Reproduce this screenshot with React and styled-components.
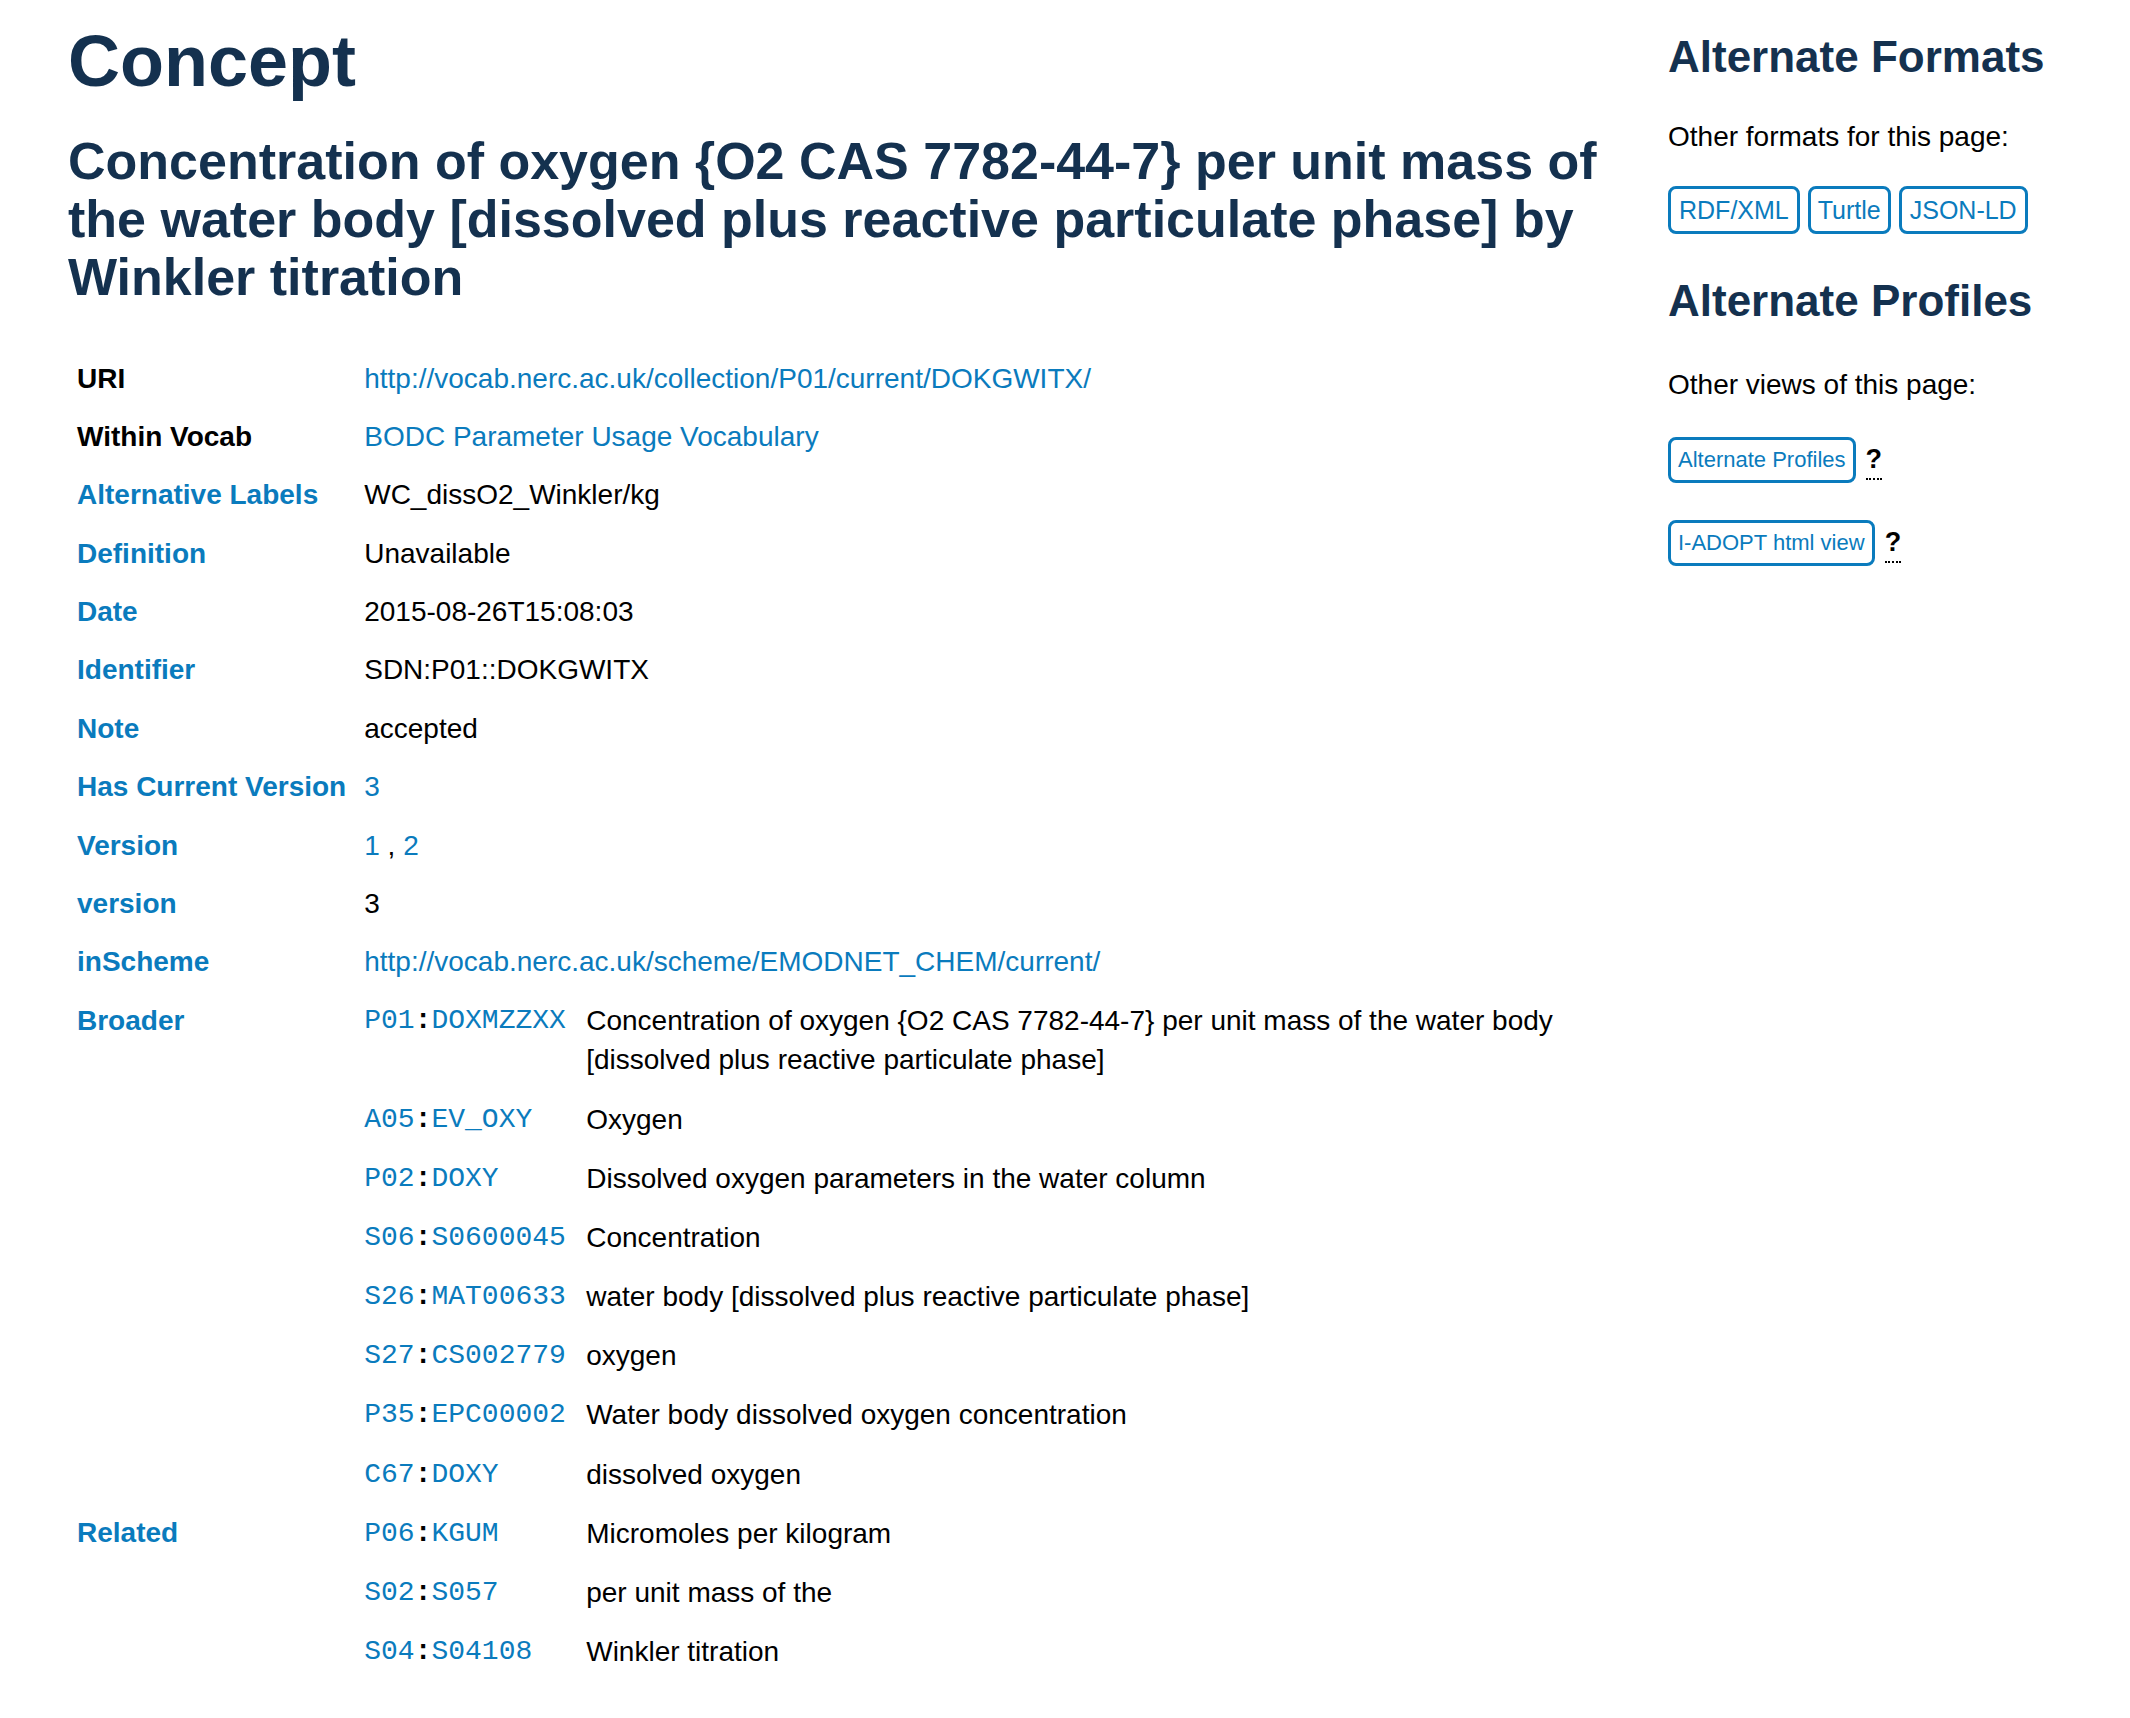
import React from "react";
import styled, { createGlobalStyle } from "styled-components";

const NAVY = "#14314f";
const BLUE = "#0a7bbd";

const Global = createGlobalStyle`
  html, body { margin: 0; padding: 0; background: #fff; }
  body {
    font-family: "Liberation Sans", Arial, Helvetica, sans-serif;
    font-size: 28px;
    line-height: 1.4;
    color: #000;
  }
  * { box-sizing: border-box; }
`;

const Page = styled.div`
  display: flex;
  align-items: flex-start;
  width: 2130px;
`;

const Main = styled.main`
  flex: 0 0 1630px;
  padding-left: 68px;
`;

const Aside = styled.aside`
  flex: 1;
  margin-left: 38px;
  padding-top: 31px;
`;

const Title = styled.h1`
  margin: 22px 0 0;
  font-size: 72px;
  line-height: 79px;
  font-weight: 700;
  color: ${NAVY};
`;

const Subtitle = styled.h2`
  margin: 31px 0 43px;
  font-size: 52px;
  line-height: 58px;
  font-weight: 700;
  color: ${NAVY};
`;

const PropTable = styled.div`
  display: grid;
  grid-template-columns: max-content minmax(0, 1fr);
`;

const Label = styled.div`
  padding: 9.6px 9px;
  font-weight: 700;
  white-space: nowrap;
  color: ${(p) => (p.$plain ? "#000" : BLUE)};
`;

const Value = styled.div`
  padding: ${(p) => (p.$nested ? "0 9px" : "9.6px 9px")};
  min-width: 0;
`;

const Link = styled.a`
  color: ${BLUE};
  text-decoration: none;
`;

const Nested = styled.div`
  display: grid;
  grid-template-columns: 222px minmax(0, 1fr);
`;

const Prefix = styled.div`
  padding: 10px 0;
  font-family: "Liberation Mono", "Courier New", monospace;
  font-size: 28px;
  white-space: nowrap;
`;

const PrefixPart = styled.span`
  color: ${BLUE};
`;

const Colon = styled.span`
  color: #000;
  font-weight: 700;
`;

const Desc = styled.div`
  padding: 10px 0;
`;

const SideTitle = styled.h3`
  margin: 0;
  font-size: 44px;
  line-height: 52px;
  font-weight: 700;
  color: ${NAVY};
  margin-top: ${(p) => p.$top || 0}px;
`;

const SideText = styled.p`
  margin: ${(p) => p.$top || 35}px 0 0;
  font-size: 28px;
  line-height: 39px;
`;

const ButtonRow = styled.div`
  display: flex;
  align-items: center;
  gap: ${(p) => p.$gap || 10}px;
  margin-top: ${(p) => p.$top}px;
`;

const FormatButton = styled.a`
  display: inline-block;
  border: 3px solid ${BLUE};
  border-radius: 8px;
  color: ${BLUE};
  text-decoration: none;
  font-size: ${(p) => p.$size}px;
  line-height: ${(p) => p.$lh}px;
  padding: 4px ${(p) => p.$px}px;
  white-space: nowrap;
`;

const Help = styled.abbr`
  font-weight: 700;
  font-size: 27px;
  line-height: 26px;
  color: #000;
  text-decoration: none;
  border-bottom: 2px dotted #000;
  padding-bottom: 6px;
  margin-top: 6px;
  cursor: help;
`;

const rows = [
  { label: "URI", plain: true, value: <Link href="#">http://vocab.nerc.ac.uk/collection/P01/current/DOKGWITX/</Link> },
  { label: "Within Vocab", plain: true, value: <Link href="#">BODC Parameter Usage Vocabulary</Link> },
  { label: "Alternative Labels", value: "WC_dissO2_Winkler/kg" },
  { label: "Definition", value: "Unavailable" },
  { label: "Date", value: "2015-08-26T15:08:03" },
  { label: "Identifier", value: "SDN:P01::DOKGWITX" },
  { label: "Note", value: "accepted" },
  { label: "Has Current Version", value: <Link href="#">3</Link> },
  {
    label: "Version",
    value: (
      <>
        <Link href="#">1</Link> , <Link href="#">2</Link>
      </>
    ),
  },
  { label: "version", value: "3" },
  { label: "inScheme", value: <Link href="#">http://vocab.nerc.ac.uk/scheme/EMODNET_CHEM/current/</Link> },
];

const broader = [
  ["P01", "DOXMZZXX", "Concentration of oxygen {O2 CAS 7782-44-7} per unit mass of the water body [dissolved plus reactive particulate phase]"],
  ["A05", "EV_OXY", "Oxygen"],
  ["P02", "DOXY", "Dissolved oxygen parameters in the water column"],
  ["S06", "S0600045", "Concentration"],
  ["S26", "MAT00633", "water body [dissolved plus reactive particulate phase]"],
  ["S27", "CS002779", "oxygen"],
  ["P35", "EPC00002", "Water body dissolved oxygen concentration"],
  ["C67", "DOXY", "dissolved oxygen"],
];

const related = [
  ["P06", "KGUM", "Micromoles per kilogram"],
  ["S02", "S057", "per unit mass of the"],
  ["S04", "S04108", "Winkler titration"],
];

const SUBTITLE =
  "Concentration of oxygen {O2 CAS 7782-44-7} per unit mass of the water body [dissolved plus reactive particulate phase] by Winkler titration";

function NestedList({ items }) {
  return (
    <Nested>
      {items.map(([a, b, d]) => (
        <React.Fragment key={a + b}>
          <Prefix>
            <PrefixPart>{a}</PrefixPart>
            <Colon>:</Colon>
            <PrefixPart>{b}</PrefixPart>
          </Prefix>
          <Desc>{d}</Desc>
        </React.Fragment>
      ))}
    </Nested>
  );
}

export default function App() {
  return (
    <>
      <Global />
      <Page>
        <Main>
          <Title>Concept</Title>
          <Subtitle>{SUBTITLE}</Subtitle>
          <PropTable>
            {rows.map((r) => (
              <React.Fragment key={r.label}>
                <Label $plain={r.plain}>{r.label}</Label>
                <Value>{r.value}</Value>
              </React.Fragment>
            ))}
            <Label>Broader</Label>
            <Value $nested>
              <NestedList items={broader} />
            </Value>
            <Label>Related</Label>
            <Value $nested>
              <NestedList items={related} />
            </Value>
          </PropTable>
        </Main>
        <Aside>
          <SideTitle>Alternate Formats</SideTitle>
          <SideText $top={34}>Other formats for this page:</SideText>
          <ButtonRow $top={30} $gap={8}>
            <FormatButton href="#" $size={25} $lh={34} $px={8}>RDF/XML</FormatButton>
            <FormatButton href="#" $size={25} $lh={34} $px={7}>Turtle</FormatButton>
            <FormatButton href="#" $size={25} $lh={34} $px={8}>JSON-LD</FormatButton>
          </ButtonRow>
          <SideTitle $top={41}>Alternate Profiles</SideTitle>
          <SideText $top={38}>Other views of this page:</SideText>
          <ButtonRow $top={33} $gap={10}>
            <FormatButton href="#" $size={22} $lh={32} $px={7}>Alternate Profiles</FormatButton>
            <Help title="Alternate Profiles">?</Help>
          </ButtonRow>
          <ButtonRow $top={37} $gap={10}>
            <FormatButton href="#" $size={22} $lh={32} $px={7}>I-ADOPT html view</FormatButton>
            <Help title="I-ADOPT html view">?</Help>
          </ButtonRow>
        </Aside>
      </Page>
    </>
  );
}
